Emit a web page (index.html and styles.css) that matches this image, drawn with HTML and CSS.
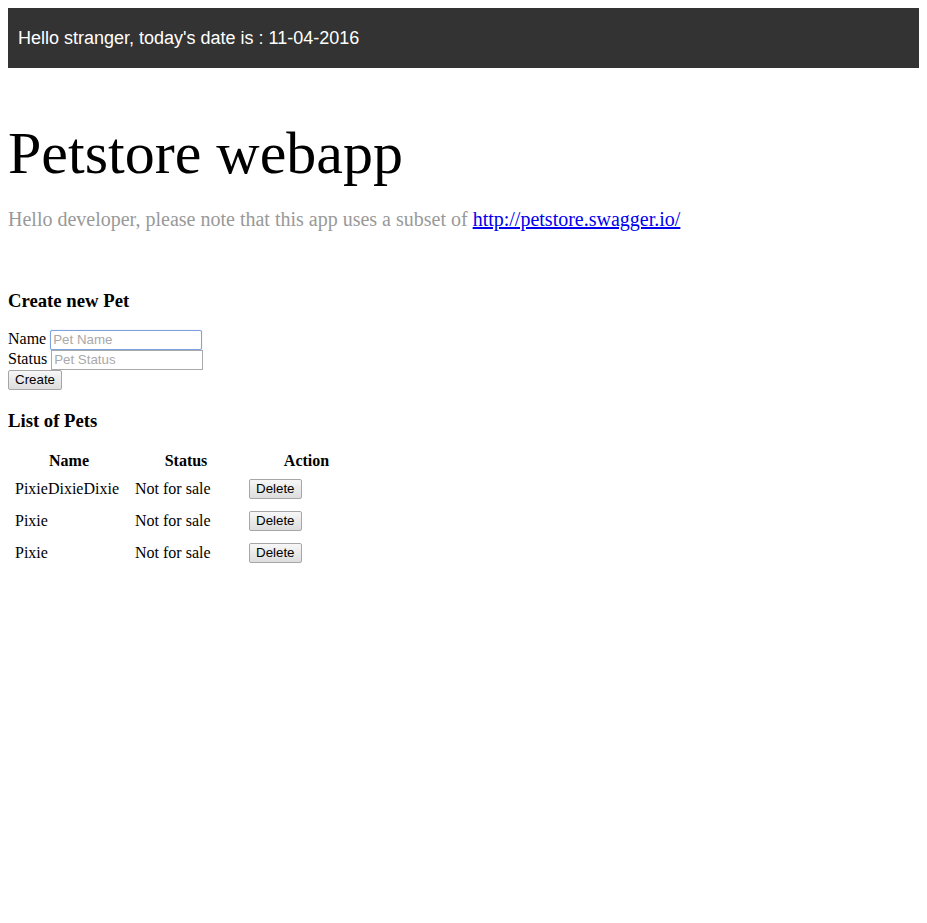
FILE: index.html
```html
<!DOCTYPE html>
<html>
<head>
<meta charset="utf-8">
<title>Petstore webapp</title>
<link rel="stylesheet" href="styles.css">
</head>
<body>
<div class="topbar">Hello stranger, today's date is : 11-04-2016</div>
<h1 class="title">Petstore webapp</h1>
<p class="lead">Hello developer, please note that this app uses a subset of <a href="#">http://petstore.swagger.io/</a></p>
<h3 class="section first">Create new Pet</h3>
<form class="pet-form">
  <div class="field"><span class="label">Name</span><input class="text-input focused" type="text" placeholder="Pet Name"></div>
  <div class="field"><span class="label">Status</span><input class="text-input" type="text" placeholder="Pet Status"></div>
  <button class="btn" type="button">Create</button>
</form>
<h3 class="section">List of Pets</h3>
<table class="pets">
  <thead>
    <tr><th class="col-name">Name</th><th class="col-status">Status</th><th class="col-action">Action</th></tr>
  </thead>
  <tbody>
    <tr><td>PixieDixieDixie</td><td>Not for sale</td><td><button class="btn row-btn" type="button">Delete</button></td></tr>
    <tr><td>Pixie</td><td>Not for sale</td><td><button class="btn row-btn" type="button">Delete</button></td></tr>
    <tr><td>Pixie</td><td>Not for sale</td><td><button class="btn row-btn" type="button">Delete</button></td></tr>
  </tbody>
</table>
</body>
</html>
```
FILE: styles.css
```css
body {
  margin: 8px;
  font-family: "Liberation Serif", "Times New Roman", serif;
  font-size: 16px;
  color: #000;
  background: #fff;
}

.topbar {
  height: 60px;
  box-sizing: border-box;
  background: #333333;
  color: #fff;
  font-family: "Liberation Sans", Arial, sans-serif;
  font-size: 18px;
  line-height: 60px;
  padding-left: 10px;
}

.title {
  font-size: 60px;
  font-weight: normal;
  margin: 51px 0 0 0;
  line-height: normal;
}

.lead {
  font-size: 20px;
  color: #999999;
  margin: 20px 0 0 0;
}

.lead a {
  color: #0000ee;
  text-decoration: underline;
}

.section {
  font-size: 18.72px;
  font-weight: bold;
  margin: 20px 0 17.5px;
}

.section.first {
  margin-top: 59px;
}

.pet-form {
  margin: 0;
}

.field {
  display: flex;
  align-items: flex-start;
  gap: 4px;
  height: 20px;
}

.label {
  line-height: 18.4px;
}

.text-input {
  box-sizing: border-box;
  width: 152px;
  height: 20px;
  margin: 0;
  padding: 1px 2px;
  border: 1px solid #a9a9a9;
  font-family: "Liberation Sans", Arial, sans-serif;
  font-size: 13.33px;
  outline: none;
}

.text-input::placeholder {
  color: #a9a9a9;
}

.text-input.focused {
  border-color: #7da2dd;
  border-radius: 2px;
  box-shadow: 0 0 1px #9fbbe8;
}

.btn {
  display: block;
  box-sizing: border-box;
  height: 20px;
  margin: 0;
  padding: 0 6px;
  border: 1px solid #a6a6a6;
  border-radius: 2px;
  background: linear-gradient(#f7f7f7, #dddddd);
  font-family: "Liberation Sans", Arial, sans-serif;
  font-size: 13.33px;
  color: #000;
  line-height: 18px;
}

.pets {
  border-spacing: 2px;
  margin: 0;
}

.pets th {
  font-weight: bold;
  text-align: center;
  padding: 1px 5px 2px;
}

.pets td {
  padding: 5px;
  height: 20px;
  text-align: left;
  vertical-align: middle;
}

.pets .col-name {
  width: 108px;
}

.pets .col-status {
  width: 102px;
}

.pets .col-action {
  width: 115px;
}
```
